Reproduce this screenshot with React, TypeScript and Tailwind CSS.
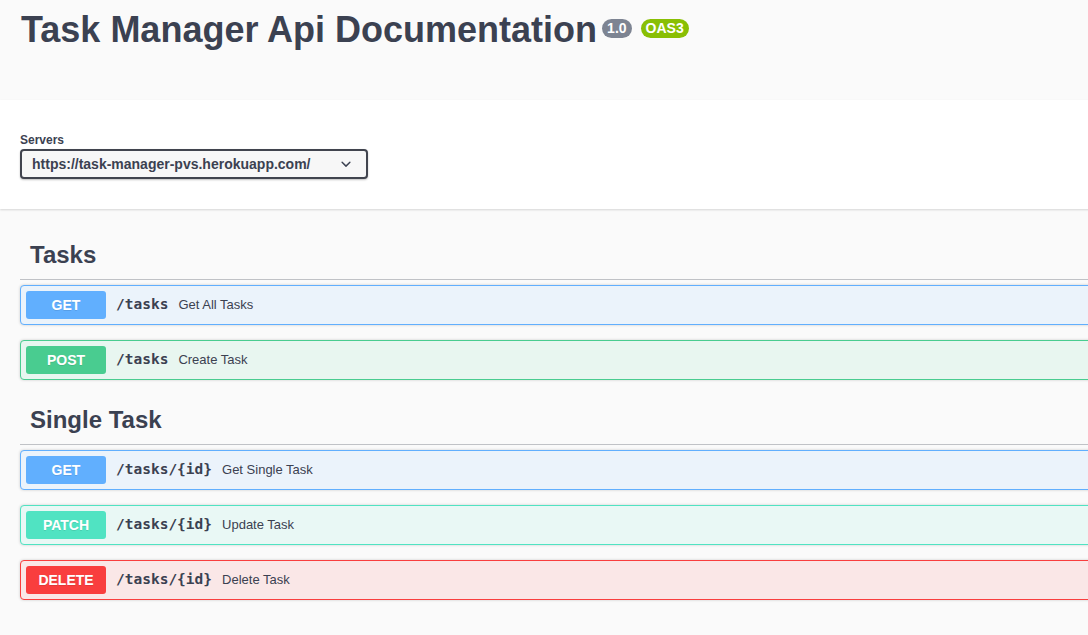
import { ReactNode } from 'react';

type Method = 'GET' | 'POST' | 'PATCH' | 'DELETE';

interface Operation {
  method: Method;
  path: string;
  summary: string;
}

interface Tag {
  name: string;
  ops: Operation[];
}

const methodStyles: Record<Method, { block: string; badge: string }> = {
  GET: { block: 'border-[#61affe] bg-[#ebf3fb]', badge: 'bg-[#61affe]' },
  POST: { block: 'border-[#49cc90] bg-[#e8f6f0]', badge: 'bg-[#49cc90]' },
  PATCH: { block: 'border-[#50e3c2] bg-[#e9f8f5]', badge: 'bg-[#50e3c2]' },
  DELETE: { block: 'border-[#f93e3e] bg-[#fae7e7]', badge: 'bg-[#f93e3e]' },
};

const tags: Tag[] = [
  {
    name: 'Tasks',
    ops: [
      { method: 'GET', path: '/tasks', summary: 'Get All Tasks' },
      { method: 'POST', path: '/tasks', summary: 'Create Task' },
    ],
  },
  {
    name: 'Single Task',
    ops: [
      { method: 'GET', path: '/tasks/{id}', summary: 'Get Single Task' },
      { method: 'PATCH', path: '/tasks/{id}', summary: 'Update Task' },
      { method: 'DELETE', path: '/tasks/{id}', summary: 'Delete Task' },
    ],
  },
];

function Stamp({ color, className, children }: { color: string; className: string; children: ReactNode }) {
  return (
    <span
      className={`mt-[10px] rounded-full px-[5px] py-[2px] text-[14px] font-bold leading-[15px] text-white ${color} ${className}`}
    >
      {children}
    </span>
  );
}

function OpBlock({ op }: { op: Operation }) {
  const s = methodStyles[op.method];
  return (
    <div className={`mb-[15px] flex items-center rounded border p-[5px] shadow-[0_0_3px_rgba(0,0,0,0.19)] ${s.block}`}>
      <span
        className={`flex h-7 min-w-[80px] items-center justify-center rounded-[3px] text-[14px] font-bold text-white [text-shadow:0_1px_0_rgba(0,0,0,0.1)] ${s.badge}`}
      >
        {op.method}
      </span>
      <span className="px-[10px] font-['DejaVu_Sans_Mono',monospace] text-[14.5px] font-bold text-[#3b4151]">
        {op.path}
      </span>
      <span className="text-[13px] text-[#3b4151]">{op.summary}</span>
    </div>
  );
}

export default function App() {
  return (
    <div className="min-h-screen overflow-hidden bg-[#fafafa] font-['Liberation_Sans',Arial,sans-serif] text-[#3b4151]">
      <div className="min-w-[1140px]">
        {/* Info header */}
        <div className="h-[100px] pl-[21px] pr-5 pt-[9px]">
          <div className="flex items-start">
            <h2 className="text-[36px] font-bold leading-[41px] text-[#3b4151]">Task Manager Api Documentation</h2>
            <Stamp color="bg-[#7d8492]" className="ml-[5px]">1.0</Stamp>
            <Stamp color="bg-[#89bf04]" className="ml-[9px]">OAS3</Stamp>
          </div>
        </div>

        {/* Servers */}
        <div className="mb-[21px] bg-white px-5 pb-[30px] pt-[33px] shadow-[0_1px_2px_0_rgba(0,0,0,0.15)]">
          <div className="mb-[2px] text-[12px] font-bold leading-[14px]">Servers</div>
          <div className="flex h-[30px] w-[348px] items-center justify-between rounded border-2 border-[#41444e] bg-[#f7f7f7] pl-[10px] pr-[10px] shadow-[0_1px_2px_0_rgba(0,0,0,0.25)]">
            <span className="text-[14px] font-bold">https://task-manager-pvs.herokuapp.com/</span>
            <svg width="20" height="20" viewBox="0 0 20 20" fill="#3b4151">
              <path d="M13.418 7.859a.695.695 0 01.978 0 .68.68 0 010 .969l-3.908 3.83a.697.697 0 01-.979 0l-3.908-3.83a.68.68 0 010-.969.695.695 0 01.978 0L10 11l3.418-3.141z" />
            </svg>
          </div>
        </div>

        {/* Operations */}
        <div className="px-5">
          {tags.map((tag) => (
            <div key={tag.name}>
              <h3 className="mb-[5px] border-b border-[rgba(59,65,81,0.3)] py-[10px] pl-[10px] pr-5 text-[24px] font-bold leading-[29px]">
                {tag.name}
              </h3>
              {tag.ops.map((op) => (
                <OpBlock key={op.method + op.path} op={op} />
              ))}
            </div>
          ))}
        </div>
      </div>
    </div>
  );
}
